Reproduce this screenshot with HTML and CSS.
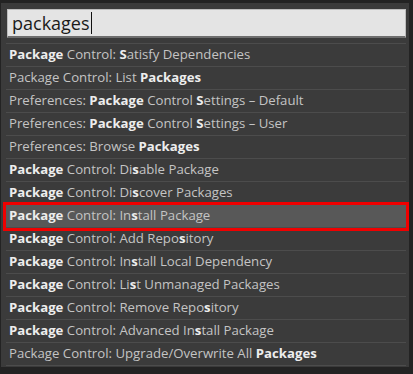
FILE: index.html
```html
<!DOCTYPE html>
<html>
<head>
<meta charset="utf-8">
<link rel="stylesheet" href="styles.css">
</head>
<body>
<div class="panel">
  <div class="input">packages<span class="caret"></span></div>
  <ul class="list">
    <li><b>Package</b> Control: <b>S</b>atisfy Dependencies</li>
    <li>Package Control: List <b>Packages</b></li>
    <li>Preferences: <b>Package</b> Control <b>S</b>ettings – Default</li>
    <li>Preferences: <b>Package</b> Control <b>S</b>ettings – User</li>
    <li>Preferences: Browse <b>Packages</b></li>
    <li><b>Package</b> Control: Di<b>s</b>able Package</li>
    <li><b>Package</b> Control: Di<b>s</b>cover Packages</li>
    <li class="sel"><b>Package</b> Control: In<b>s</b>tall Package</li>
    <li><b>Package</b> Control: Add Repo<b>s</b>itory</li>
    <li><b>Package</b> Control: In<b>s</b>tall Local Dependency</li>
    <li><b>Package</b> Control: Li<b>s</b>t Unmanaged Packages</li>
    <li><b>Package</b> Control: Remove Repo<b>s</b>itory</li>
    <li><b>Package</b> Control: Advanced In<b>s</b>tall Package</li>
    <li>Package Control: Upgrade/Overwrite All <b>Packages</b></li>
  </ul>
</div>
</body>
</html>
```
FILE: styles.css
```css
html, body {
  margin: 0;
  padding: 0;
  background: #232323;
  width: 413px;
  height: 374px;
  overflow: hidden;
}
.panel {
  margin: 3px 0 0 1px;
  width: 408px;
  height: 364px;
  background: #3b3b3b;
  padding: 6px 0 0 0;
  box-sizing: border-box;
  font-family: "Open Sans", "Noto Sans", sans-serif;
}
.input {
  margin: 0 3px 0 6px;
  height: 29px;
  box-sizing: border-box;
  background: #e4e4e4;
  border: 1px solid #bdbdbd;
  border-bottom: 2px solid #6e6e6e;
  color: #1a1a1a;
  font-size: 18px;
  line-height: 26px;
  padding-left: 4px;
  display: flex;
  align-items: center;
}
.caret {
  display: inline-block;
  width: 1px;
  height: 22px;
  background: #111;
  margin-left: 1px;
}
.list {
  list-style: none;
  margin: 5px 3px 0 5px;
  padding: 0;
  border-top: 1px solid #4c4c4c;
}
.list li {
  height: 22px;
  border-bottom: 1px solid #4c4c4c;
  font-size: 13.2px;
  line-height: 21px;
  color: #c4c4c4;
  padding-left: 3px;
  white-space: nowrap;
}
.list li b {
  color: #ededed;
  font-weight: 700;
}
.list li.sel {
  background: #585858;
  outline: 3px solid #f00000;
  outline-offset: 0;
  position: relative;
}
```
